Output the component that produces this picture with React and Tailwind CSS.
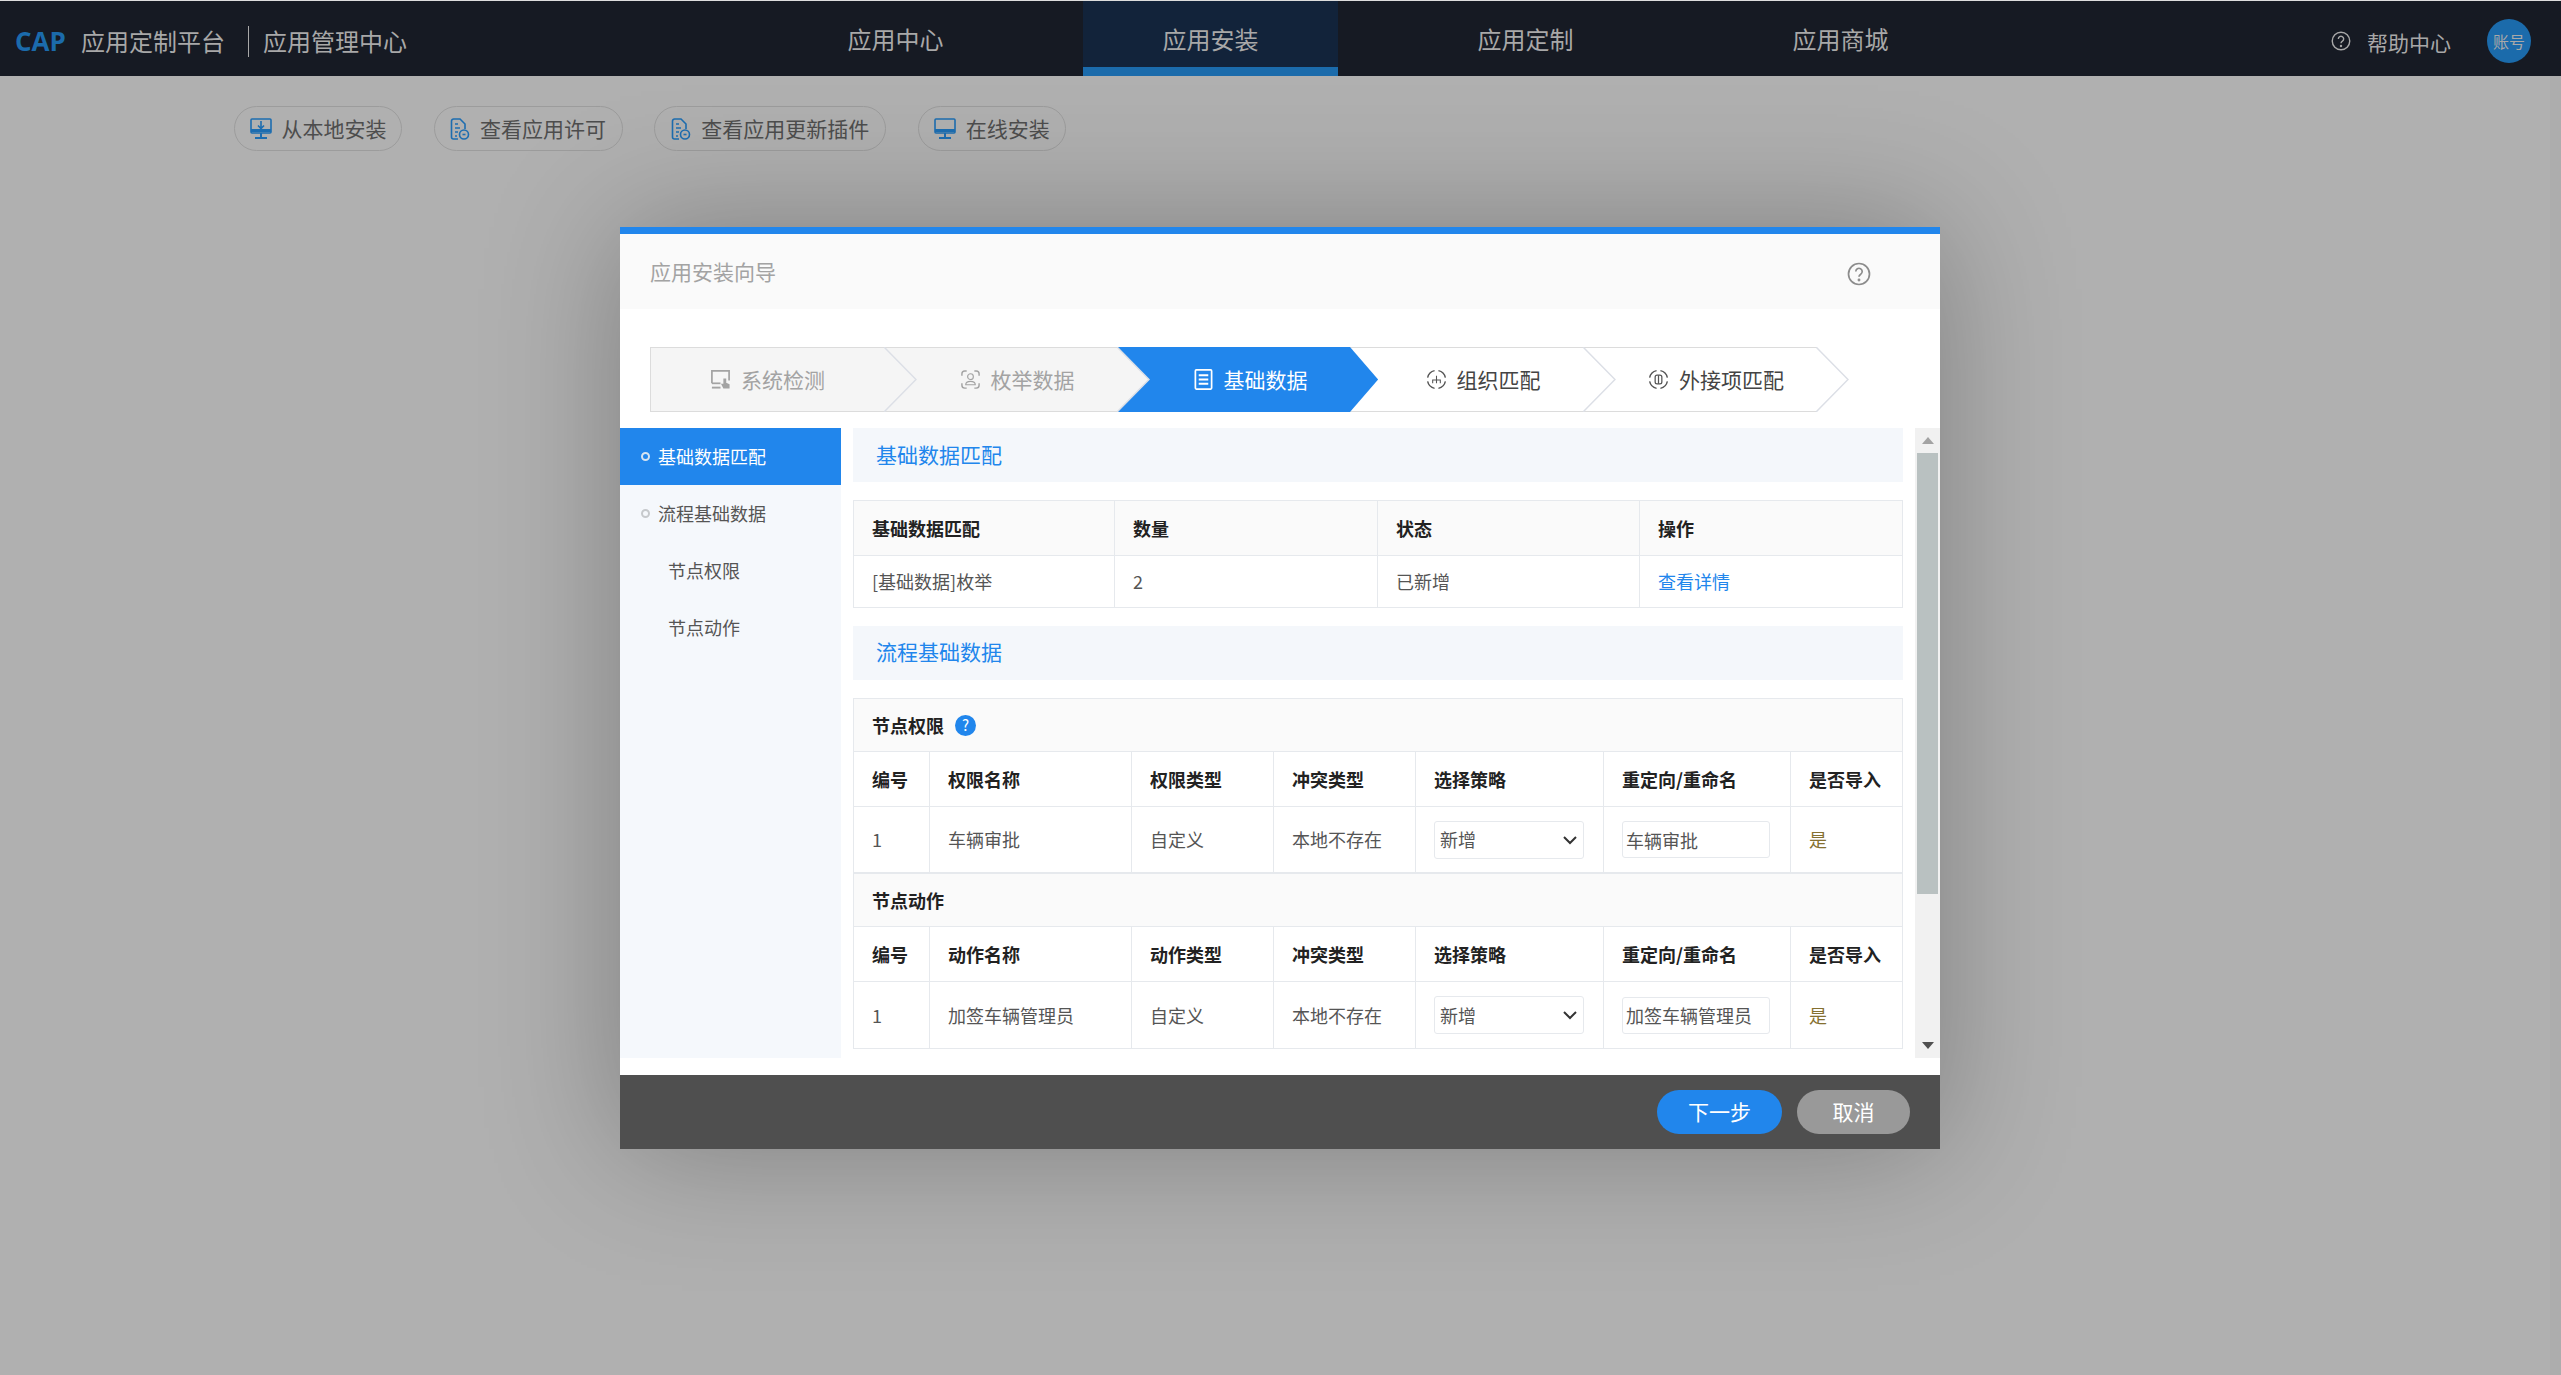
import React from 'react';

const cjk = "font-['Noto_Sans_CJK_SC','Noto_Sans',sans-serif]";

const tabs = ['应用中心', '应用安装', '应用定制', '应用商城'];

const toolButtons = [
	{ label: '从本地安装', icon: 'download', cls: 'w-[168px]' },
	{ label: '查看应用许可', icon: 'doc', cls: 'w-[189px]' },
	{ label: '查看应用更新插件', icon: 'doc', cls: 'w-[232px]' },
	{ label: '在线安装', icon: 'monitor', cls: 'w-[148px]' },
];

const ToolIcon = ({ type }) => {
	if (type === 'doc') {
		return (
			<svg viewBox="0 0 20 22" className="w-[20px] h-[22px] shrink-0" fill="none" stroke="#1d6db0" strokeWidth="1.6">
				<path d="M8 21H3.500A2 2 0 0 1 1.500 19V3A2 2 0 0 1 3.500 1H10l5 5v5" />
				<path d="M5 6h3M5 10h5M5 14h3M5 18h2" />
				<circle cx="14" cy="16.500" r="4.500" />
				<path d="M12.500 16.500h3" />
			</svg>
		);
	}
	return (
		<svg viewBox="0 0 22 21" className="w-[22px] h-[21px] shrink-0" fill="none" stroke="#1d6db0" strokeWidth="1.6">
			<rect x="1" y="1" width="20" height="14" rx="1" />
			<path d="M1 12.500h20" strokeWidth="3" />
			<path d="M11 15v4M5 20h12" strokeWidth="2" />
			{type === 'download' && <path d="M11 3v7M8 7.500l3 3 3-3" />}
		</svg>
	);
};

const HelpIcon = ({ className, color }) => (
	<svg viewBox="0 0 24 24" className={className} fill="none" stroke={color} strokeWidth="1.7">
		<circle cx="12" cy="12" r="10.500" />
		<path d="M8.800 9.500a3.200 3.200 0 1 1 4.900 2.700c-1.100.7-1.700 1.300-1.700 2.600" />
		<circle cx="12" cy="18" r=".6" fill={color} />
	</svg>
);

// step icons
const StepIcon = ({ type, color }) => {
	const ring = (
		<circle cx="11" cy="11" r="9.500" pathLength="100" strokeDasharray="18 7" strokeDashoffset="-3.500" />
	);
	return (
		<svg viewBox="0 0 22 22" className="w-[21px] h-[21px] shrink-0" fill="none" stroke={color} strokeWidth="1.500">
			{type === 'device' && (
				<>
					<path d="M2 15V2h18v10" strokeWidth="1.800" />
					<path d="M2 15h9" strokeWidth="1.800" />
					<path d="M2 19.500h9" strokeWidth="2" />
					<path d="M14 10v5.500h-2.500l2.500 5h6.500v-4.500l-3.500-1.500v-4.500z" fill={color} stroke="none" />
				</>
			)}
			{type === 'face' && (
				<>
					<path d="M2 7V5a3 3 0 0 1 3-3h2M15 2h2a3 3 0 0 1 3 3v2M20 15v2a3 3 0 0 1-3 3h-2M7 20H5a3 3 0 0 1-3-3v-2" />
					<circle cx="11" cy="8" r="3" strokeWidth="1.200" />
					<path d="M6 16.500c0-2.500 2-3.500 5-3.500s5 1 5 3.500z" strokeWidth="1.200" />
				</>
			)}
			{type === 'list' && (
				<>
					<rect x="2.500" y="1" width="17" height="20" rx="1" strokeWidth="1.800" />
					<path d="M6 6.500h10M6 11h10M6 15.500h10" strokeWidth="2" />
				</>
			)}
			{type === 'org' && (
				<>
					{ring}
					<path d="M7 15v-3.500h8V15M11 7v8" strokeWidth="1.100" />
				</>
			)}
			{type === 'link' && (
				<>
					{ring}
					<rect x="7.500" y="6.500" width="7" height="9" rx="2" strokeWidth="1.300" />
					<path d="M11 6.500v9" strokeWidth="1.300" />
				</>
			)}
		</svg>
	);
};

const steps = [
	{ label: '系统检测', icon: 'device', state: 'done' },
	{ label: '枚举数据', icon: 'face', state: 'done' },
	{ label: '基础数据', icon: 'list', state: 'active' },
	{ label: '组织匹配', icon: 'org', state: 'todo' },
	{ label: '外接项匹配', icon: 'link', state: 'todo' },
];

const Step = ({ step, index }) => {
	const active = step.state === 'active';
	const done = step.state === 'done';
	const fill = active ? '#2186ec' : done ? '#f5f5f5' : '#ffffff';
	const iconColor = active ? '#ffffff' : done ? '#a3a3a3' : '#555555';
	return (
		<div
			className={`relative h-[65px] border-y flex items-center justify-center gap-[10px] text-[21px] ${
				active ? 'bg-[#2186ec] border-[#2186ec] text-white' : done ? 'bg-[#f5f5f5] border-[#dcdcdc] text-[#a3a3a3]' : 'bg-white border-[#dcdcdc] text-[#444]'
			} ${index === 0 ? 'w-[234px] border-l' : 'w-[233px] pl-[33px]'}`}
			style={{ zIndex: 10 - index }}
		>
			<StepIcon type={step.icon} color={iconColor} />
			<span>{step.label}</span>
			<svg
				viewBox="0 0 33 65"
				preserveAspectRatio="none"
				className={`absolute left-full top-[-1px] h-[65px] ${active ? 'w-[29px]' : 'w-[33px]'}`}
			>
				<path d="M0 0L32 32.500L0 65z" fill={fill} />
				{!active && <path d="M0 0L32 32.500L0 65" fill="none" stroke="#dcdfe6" strokeWidth="1.500" />}
			</svg>
		</div>
	);
};

const Cell = ({ className = '', children }) => (
	<div className={`flex items-center pl-[18px] pr-[10px] border-r border-[#e6e9ed] last:border-r-0 ${className}`}>{children}</div>
);

const FlowTable = ({ title, help, nameHead, typeHead, name, thick }) => {
	const cols = 'grid grid-cols-[76px_202px_142px_142px_188px_187px_1fr]';
	return (
		<>
			<div className="h-[53px] bg-[#fafafa] border-b border-[#e6e9ed] flex items-center pl-[18px] gap-[11px] font-bold text-[18px] text-[#222]">
				{title}
				{help && (
					<span className="w-[21px] h-[21px] rounded-full bg-[#2186ec] text-white text-[15px] font-normal flex items-center justify-center">?</span>
				)}
			</div>
			<div className={`${cols} h-[55px] border-b border-[#e6e9ed] font-bold text-[18px] text-[#222]`}>
				{['编号', nameHead, typeHead, '冲突类型', '选择策略', '重定向/重命名', '是否导入'].map((h) => (
					<Cell key={h}>{h}</Cell>
				))}
			</div>
			<div className={`${cols} ${thick ? 'h-[67px] border-b-[2px]' : 'h-[66px]'} border-[#e6e9ed] text-[18px] text-[#555]`}>
				<Cell>1</Cell>
				<Cell>{name}</Cell>
				<Cell>自定义</Cell>
				<Cell>本地不存在</Cell>
				<Cell>
					<div className="w-[150px] shrink-0 h-[38px] border border-[#e6e9ed] rounded-[3px] bg-white flex items-center justify-between pl-[5px] pr-[6px]">
						<span>新增</span>
						<svg viewBox="0 0 14 10" className="w-[14px] h-[10px]" fill="none" stroke="#333" strokeWidth="2">
							<path d="M1 2l6 6 6-6" />
						</svg>
					</div>
				</Cell>
				<Cell>
					<input
						readOnly
						value={name}
						className="w-[148px] shrink-0 h-[37px] border border-[#e6e9ed] rounded-[3px] px-[3px] bg-white text-[18px] text-[#555] outline-none"
					/>
				</Cell>
				<Cell className="text-[#857030]">是</Cell>
			</div>
		</>
	);
};

const sideItems = [
	{ label: '基础数据匹配', dot: true, active: true },
	{ label: '流程基础数据', dot: true },
	{ label: '节点权限' },
	{ label: '节点动作' },
];

export default function App() {
	return (
		<div className={`relative h-screen overflow-hidden bg-[#b0b0b0] border-t border-[#dddddd] ${cjk}`}>
			{/* top nav */}
			<header className="h-[75px] bg-[#161a23] flex items-center text-[#a8a8a8]">
				<div className="w-[768px] flex items-center text-[24px] pt-[5px]">
					<span className="ml-[15px] w-[66px] font-['Open_Sans',sans-serif] font-bold text-[26px] text-[#1b6bab]">CAP</span>
					<span>应用定制平台</span>
					<span className="w-px h-[31px] bg-[#a8a8a8] ml-[23px] mr-[14px]" />
					<span>应用管理中心</span>
				</div>
				<nav className="flex h-full gap-[60px]">
					{tabs.map((t, i) => (
						<div
							key={t}
							className={`w-[255px] flex items-center justify-center text-[24px] ${
								i === 1 ? 'bg-[#12233a] border-b-[9px] border-[#1b6bab] pt-[9px]' : 'pt-[1px]'
							}`}
						>
							{t}
						</div>
					))}
				</nav>
				<div className="ml-auto flex items-center mr-[30px] text-[21px] pt-[5px]">
					<HelpIcon className="w-[20px] h-[20px]" color="#a8a8a8" />
					<span className="ml-[16px] mt-[3px]">帮助中心</span>
					<span className="ml-[36px] w-[44px] h-[44px] rounded-full bg-[#1b6bab] text-[16px] flex items-center justify-center">账号</span>
				</div>
			</header>

			{/* toolbar */}
			<div className="flex pl-[234px] pt-[30px] gap-[31.6px] text-[21px] text-[#4d4d4d]">
				{toolButtons.map((b) => (
					<button
						key={b.label}
						className={`${b.cls} h-[45px] rounded-full border border-[#9c9c9c] flex items-center justify-center gap-[10px]`}
					>
						<ToolIcon type={b.icon} />
						{b.label}
					</button>
				))}
			</div>

			{/* faint page scrollbar under the overlay */}
			<div className="absolute right-0 top-[75px] bottom-0 w-[11px] bg-[#adadad]" />

			{/* modal */}
			<div className="absolute left-[620px] top-[226px] w-[1320px] h-[922px] bg-white flex flex-col shadow-[0_0_125px_rgba(0,0,0,0.28)]">
				<div className="h-[7px] bg-[#2186ec]" />
				<div className="h-[75px] bg-[#fafafa] flex items-center justify-between pl-[30px] pr-[69px] text-[21px] text-[#a3a3a3]">
					<span>应用安装向导</span>
					<HelpIcon className="w-[24px] h-[24px] mt-[5px]" color="#8c8c8c" />
				</div>

				<div className="flex pl-[30px] pt-[38px] pb-[16px]">
					{steps.map((s, i) => (
						<Step key={s.label} step={s} index={i} />
					))}
				</div>

				<div className="flex h-[630px]">
					<aside className="w-[221px] bg-[#f5f8fc] text-[18px] text-[#555]">
						{sideItems.map((item) => (
							<div
								key={item.label}
								className={`h-[57px] flex items-center ${item.dot ? 'pl-[21px] gap-[8px]' : 'pl-[48px]'} ${
									item.active ? 'bg-[#2186ec] text-white' : ''
								}`}
							>
								{item.dot && (
									<span className={`w-[9px] h-[9px] rounded-full border-[2px] ${item.active ? 'border-[#d5e3f0]' : 'border-[#c6c9cc]'}`} />
								)}
								{item.label}
							</div>
						))}
					</aside>

					<main className="w-[1050px] ml-[12px]">
						<div className="h-[54px] bg-[#f4f7fb] flex items-center pl-[23px] text-[21px] text-[#2186ec]">基础数据匹配</div>
						<div className="mt-[18px] border border-[#e6e9ed] text-[18px]">
							<div className="grid grid-cols-[261px_263px_262px_1fr] h-[55px] bg-[#fafafa] border-b border-[#e6e9ed] font-bold text-[#222]">
								{['基础数据匹配', '数量', '状态', '操作'].map((h) => (
									<Cell key={h}>{h}</Cell>
								))}
							</div>
							<div className="grid grid-cols-[261px_263px_262px_1fr] h-[51px] text-[#555]">
								<Cell>[基础数据]枚举</Cell>
								<Cell>2</Cell>
								<Cell>已新增</Cell>
								<Cell className="text-[#2186ec]">查看详情</Cell>
							</div>
						</div>

						<div className="mt-[18px] h-[54px] bg-[#f4f7fb] flex items-center pl-[23px] pb-[2px] text-[21px] text-[#2186ec]">流程基础数据</div>
						<div className="mt-[18px] border border-[#e6e9ed]">
							<FlowTable title="节点权限" help nameHead="权限名称" typeHead="权限类型" name="车辆审批" thick />
							<FlowTable title="节点动作" nameHead="动作名称" typeHead="动作类型" name="加签车辆管理员" />
						</div>
					</main>

					{/* scrollbar */}
					<div className="ml-auto w-[25px] bg-[#f1f1f1] flex flex-col items-center">
						<div className="h-[25px] flex items-center justify-center">
							<div className="w-0 h-0 border-x-[6px] border-x-transparent border-b-[7px] border-b-[#a3a3a3]" />
						</div>
						<div className="w-[21px] h-[441px] bg-[#b9c1c1]" />
						<div className="mt-auto h-[25px] flex items-center justify-center">
							<div className="w-0 h-0 border-x-[6px] border-x-transparent border-t-[7px] border-t-[#505050]" />
						</div>
					</div>
				</div>

				<div className="mt-auto h-[74px] bg-[#4f4f4f] flex items-center justify-end pr-[30px] gap-[15px] text-[21px] text-white">
					<button className="w-[125px] h-[44px] rounded-full bg-[#2186ec]">下一步</button>
					<button className="w-[113px] h-[44px] rounded-full bg-[#999]">取消</button>
				</div>
			</div>
		</div>
	);
}
